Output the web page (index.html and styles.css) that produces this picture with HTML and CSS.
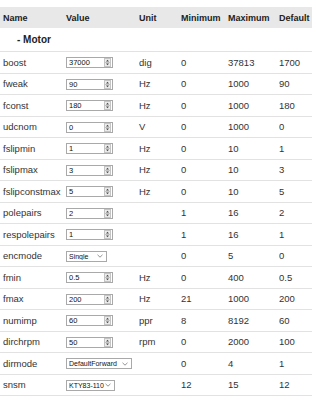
FILE: index.html
```html
<!DOCTYPE html>
<html lang="en">
<head>
    <meta charset="UTF-8">
    <title>Parameters</title>
    <link rel="stylesheet" href="styles.css">
</head>
<body>
    <table class="params">
        <thead>
            <tr>
                <th class="c-name">Name</th>
                <th class="c-value">Value</th>
                <th class="c-unit">Unit</th>
                <th class="c-min">Minimum</th>
                <th class="c-max">Maximum</th>
                <th class="c-def">Default</th>
            </tr>
        </thead>
        <tbody>
            <tr class="category"><td colspan="6">- Motor</td></tr>
            <tr><td>boost</td><td><span class="num"><input type="number" value="37000"><svg class="spin" width="7" height="9" viewBox="0 0 7 9"><rect x="0.5" y="0.5" width="6" height="8" fill="#ececec" stroke="#c4c4c4"/><line x1="1" y1="4.5" x2="6" y2="4.5" stroke="#c4c4c4"/><path d="M3.5 1.8 L5 3.4 L2 3.4 Z" fill="#444"/><path d="M3.5 7.2 L5 5.6 L2 5.6 Z" fill="#444"/></svg></span></td><td>dig</td><td>0</td><td>37813</td><td>1700</td></tr>
            <tr><td>fweak</td><td><span class="num"><input type="number" value="90"><svg class="spin" width="7" height="9" viewBox="0 0 7 9"><rect x="0.5" y="0.5" width="6" height="8" fill="#ececec" stroke="#c4c4c4"/><line x1="1" y1="4.5" x2="6" y2="4.5" stroke="#c4c4c4"/><path d="M3.5 1.8 L5 3.4 L2 3.4 Z" fill="#444"/><path d="M3.5 7.2 L5 5.6 L2 5.6 Z" fill="#444"/></svg></span></td><td>Hz</td><td>0</td><td>1000</td><td>90</td></tr>
            <tr><td>fconst</td><td><span class="num"><input type="number" value="180"><svg class="spin" width="7" height="9" viewBox="0 0 7 9"><rect x="0.5" y="0.5" width="6" height="8" fill="#ececec" stroke="#c4c4c4"/><line x1="1" y1="4.5" x2="6" y2="4.5" stroke="#c4c4c4"/><path d="M3.5 1.8 L5 3.4 L2 3.4 Z" fill="#444"/><path d="M3.5 7.2 L5 5.6 L2 5.6 Z" fill="#444"/></svg></span></td><td>Hz</td><td>0</td><td>1000</td><td>180</td></tr>
            <tr><td>udcnom</td><td><span class="num"><input type="number" value="0"><svg class="spin" width="7" height="9" viewBox="0 0 7 9"><rect x="0.5" y="0.5" width="6" height="8" fill="#ececec" stroke="#c4c4c4"/><line x1="1" y1="4.5" x2="6" y2="4.5" stroke="#c4c4c4"/><path d="M3.5 1.8 L5 3.4 L2 3.4 Z" fill="#444"/><path d="M3.5 7.2 L5 5.6 L2 5.6 Z" fill="#444"/></svg></span></td><td>V</td><td>0</td><td>1000</td><td>0</td></tr>
            <tr><td>fslipmin</td><td><span class="num"><input type="number" value="1"><svg class="spin" width="7" height="9" viewBox="0 0 7 9"><rect x="0.5" y="0.5" width="6" height="8" fill="#ececec" stroke="#c4c4c4"/><line x1="1" y1="4.5" x2="6" y2="4.5" stroke="#c4c4c4"/><path d="M3.5 1.8 L5 3.4 L2 3.4 Z" fill="#444"/><path d="M3.5 7.2 L5 5.6 L2 5.6 Z" fill="#444"/></svg></span></td><td>Hz</td><td>0</td><td>10</td><td>1</td></tr>
            <tr><td>fslipmax</td><td><span class="num"><input type="number" value="3"><svg class="spin" width="7" height="9" viewBox="0 0 7 9"><rect x="0.5" y="0.5" width="6" height="8" fill="#ececec" stroke="#c4c4c4"/><line x1="1" y1="4.5" x2="6" y2="4.5" stroke="#c4c4c4"/><path d="M3.5 1.8 L5 3.4 L2 3.4 Z" fill="#444"/><path d="M3.5 7.2 L5 5.6 L2 5.6 Z" fill="#444"/></svg></span></td><td>Hz</td><td>0</td><td>10</td><td>3</td></tr>
            <tr><td>fslipconstmax</td><td><span class="num"><input type="number" value="5"><svg class="spin" width="7" height="9" viewBox="0 0 7 9"><rect x="0.5" y="0.5" width="6" height="8" fill="#ececec" stroke="#c4c4c4"/><line x1="1" y1="4.5" x2="6" y2="4.5" stroke="#c4c4c4"/><path d="M3.5 1.8 L5 3.4 L2 3.4 Z" fill="#444"/><path d="M3.5 7.2 L5 5.6 L2 5.6 Z" fill="#444"/></svg></span></td><td>Hz</td><td>0</td><td>10</td><td>5</td></tr>
            <tr><td>polepairs</td><td><span class="num"><input type="number" value="2"><svg class="spin" width="7" height="9" viewBox="0 0 7 9"><rect x="0.5" y="0.5" width="6" height="8" fill="#ececec" stroke="#c4c4c4"/><line x1="1" y1="4.5" x2="6" y2="4.5" stroke="#c4c4c4"/><path d="M3.5 1.8 L5 3.4 L2 3.4 Z" fill="#444"/><path d="M3.5 7.2 L5 5.6 L2 5.6 Z" fill="#444"/></svg></span></td><td></td><td>1</td><td>16</td><td>2</td></tr>
            <tr><td>respolepairs</td><td><span class="num"><input type="number" value="1"><svg class="spin" width="7" height="9" viewBox="0 0 7 9"><rect x="0.5" y="0.5" width="6" height="8" fill="#ececec" stroke="#c4c4c4"/><line x1="1" y1="4.5" x2="6" y2="4.5" stroke="#c4c4c4"/><path d="M3.5 1.8 L5 3.4 L2 3.4 Z" fill="#444"/><path d="M3.5 7.2 L5 5.6 L2 5.6 Z" fill="#444"/></svg></span></td><td></td><td>1</td><td>16</td><td>1</td></tr>
            <tr><td>encmode</td><td><span class="pick w-single"><select><option>Single</option><option>AB</option></select><svg class="chev" width="6" height="4" viewBox="0 0 6 4"><path d="M0.5 0.8 L3 3.2 L5.5 0.8" fill="none" stroke="#888" stroke-width="0.9"/></svg></span></td><td></td><td>0</td><td>5</td><td>0</td></tr>
            <tr><td>fmin</td><td><span class="num"><input type="number" value="0.5"><svg class="spin" width="7" height="9" viewBox="0 0 7 9"><rect x="0.5" y="0.5" width="6" height="8" fill="#ececec" stroke="#c4c4c4"/><line x1="1" y1="4.5" x2="6" y2="4.5" stroke="#c4c4c4"/><path d="M3.5 1.8 L5 3.4 L2 3.4 Z" fill="#444"/><path d="M3.5 7.2 L5 5.6 L2 5.6 Z" fill="#444"/></svg></span></td><td>Hz</td><td>0</td><td>400</td><td>0.5</td></tr>
            <tr><td>fmax</td><td><span class="num"><input type="number" value="200"><svg class="spin" width="7" height="9" viewBox="0 0 7 9"><rect x="0.5" y="0.5" width="6" height="8" fill="#ececec" stroke="#c4c4c4"/><line x1="1" y1="4.5" x2="6" y2="4.5" stroke="#c4c4c4"/><path d="M3.5 1.8 L5 3.4 L2 3.4 Z" fill="#444"/><path d="M3.5 7.2 L5 5.6 L2 5.6 Z" fill="#444"/></svg></span></td><td>Hz</td><td>21</td><td>1000</td><td>200</td></tr>
            <tr><td>numimp</td><td><span class="num"><input type="number" value="60"><svg class="spin" width="7" height="9" viewBox="0 0 7 9"><rect x="0.5" y="0.5" width="6" height="8" fill="#ececec" stroke="#c4c4c4"/><line x1="1" y1="4.5" x2="6" y2="4.5" stroke="#c4c4c4"/><path d="M3.5 1.8 L5 3.4 L2 3.4 Z" fill="#444"/><path d="M3.5 7.2 L5 5.6 L2 5.6 Z" fill="#444"/></svg></span></td><td>ppr</td><td>8</td><td>8192</td><td>60</td></tr>
            <tr><td>dirchrpm</td><td><span class="num"><input type="number" value="50"><svg class="spin" width="7" height="9" viewBox="0 0 7 9"><rect x="0.5" y="0.5" width="6" height="8" fill="#ececec" stroke="#c4c4c4"/><line x1="1" y1="4.5" x2="6" y2="4.5" stroke="#c4c4c4"/><path d="M3.5 1.8 L5 3.4 L2 3.4 Z" fill="#444"/><path d="M3.5 7.2 L5 5.6 L2 5.6 Z" fill="#444"/></svg></span></td><td>rpm</td><td>0</td><td>2000</td><td>100</td></tr>
            <tr><td>dirmode</td><td><span class="pick w-dir"><select><option>DefaultForward</option><option>Reverse</option></select><svg class="chev" width="6" height="4" viewBox="0 0 6 4"><path d="M0.5 0.8 L3 3.2 L5.5 0.8" fill="none" stroke="#888" stroke-width="0.9"/></svg></span></td><td></td><td>0</td><td>4</td><td>1</td></tr>
            <tr><td>snsm</td><td><span class="pick w-snsm"><select><option>KTY83-110</option><option>KTY84-130</option></select><svg class="chev" width="6" height="4" viewBox="0 0 6 4"><path d="M0.5 0.8 L3 3.2 L5.5 0.8" fill="none" stroke="#888" stroke-width="0.9"/></svg></span></td><td></td><td>12</td><td>15</td><td>12</td></tr>
        </tbody>
    </table>
</body>
</html>
```

FILE: styles.css
```css
body {
    margin: 0;
    padding-top: 7px;
    font-family: "Liberation Sans", Arial, sans-serif;
    font-size: 9.5px;
    color: #333;
    background: #ffffff;
}

.params {
    width: 312px;
    border-collapse: collapse;
    table-layout: fixed;
}

.params th {
    background-color: #e8e8e8;
    font-size: 9px;
    font-weight: bold;
    text-align: left;
    height: 21px;
    padding: 0 3px;
    color: #222;
}

.c-name { width: 57px; }
.c-value { width: 67px; }
.c-unit { width: 36px; }
.c-min { width: 41px; }
.c-max { width: 45px; }

.params td {
    height: 20.5px;
    padding: 0 3px;
    border-top: 1px solid #e2e2e2;
    white-space: nowrap;
}

.params tr.category td {
    height: 23px;
    padding-left: 17px;
    font-size: 10px;
    font-weight: bold;
    color: #222;
    border-top: none;
}

.params tbody tr:last-child td {
    border-bottom: 1px solid #e2e2e2;
}

/* number field with a drawn spinner */
.num,
.pick {
    display: inline-flex;
    align-items: center;
    height: 11px;
    box-sizing: border-box;
    border: 1px solid #a9a9a9;
    background: #fff;
    vertical-align: middle;
}

.num {
    width: 47px;
}

.num input {
    flex: 1;
    min-width: 0;
    height: 100%;
    border: none;
    padding: 0 0 0 2px;
    margin: 0;
    font-family: "Liberation Sans", Arial, sans-serif;
    font-size: 7.5px;
    color: #111;
    background: transparent;
    outline: none;
    -moz-appearance: textfield;
}

.num input::-webkit-inner-spin-button,
.num input::-webkit-outer-spin-button {
    -webkit-appearance: none;
    margin: 0;
}

.spin {
    flex: none;
    margin-right: 1px;
}

.pick select {
    flex: 1;
    min-width: 0;
    height: 100%;
    border: none;
    padding: 0 0 0 2px;
    margin: 0;
    font-family: "Liberation Sans", Arial, sans-serif;
    font-size: 7px;
    color: #111;
    background: transparent;
    -webkit-appearance: none;
    appearance: none;
    outline: none;
}

.chev {
    flex: none;
    margin-right: 3px;
}

.w-single { width: 41px; }
.w-dir { width: 66px; }
.w-snsm { width: 49px; }
```
